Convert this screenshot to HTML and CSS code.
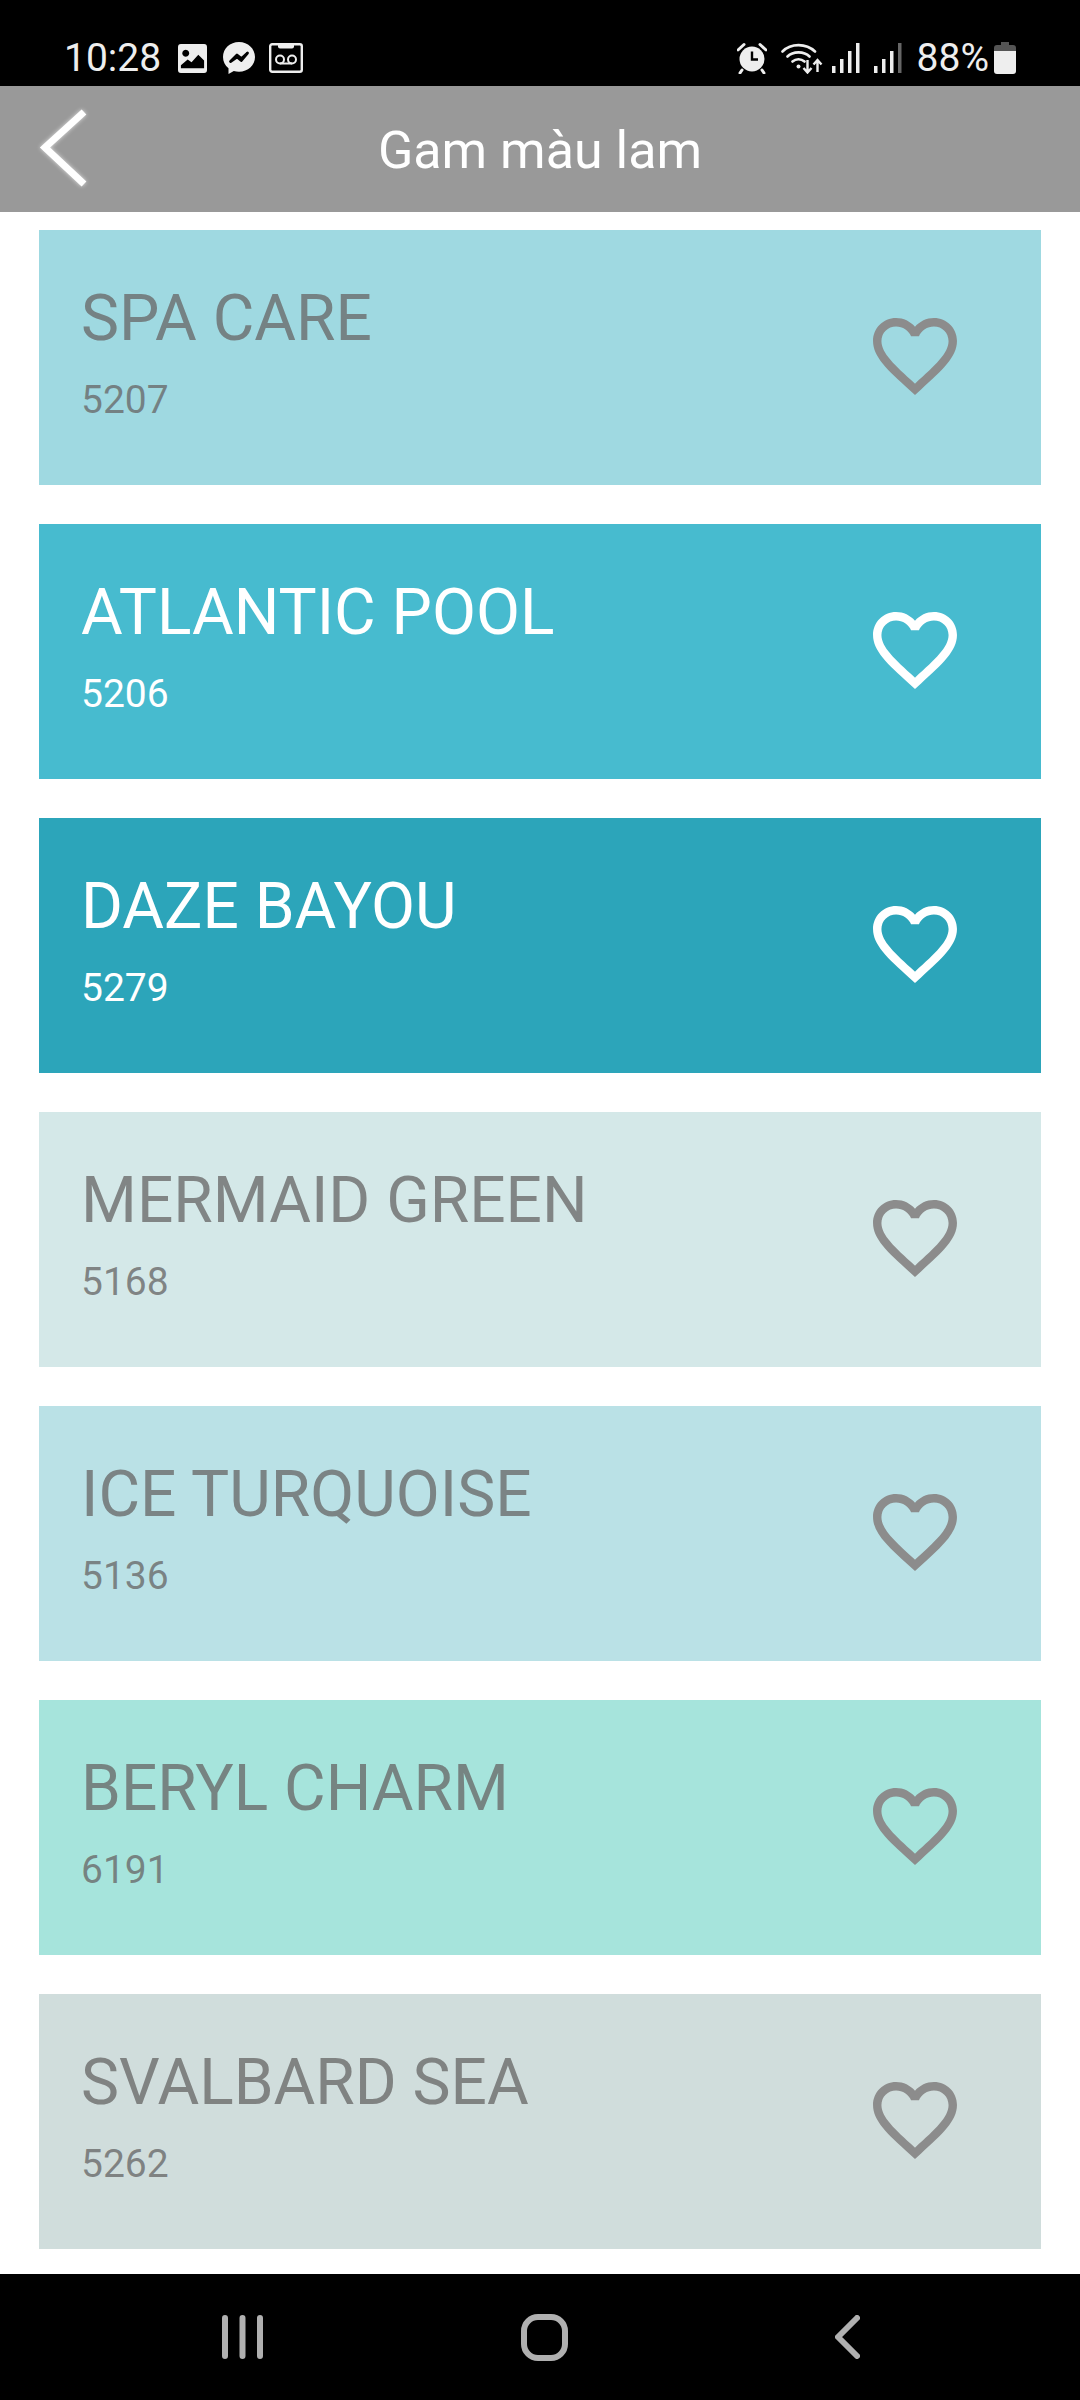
FILE: index.html
```html
<!DOCTYPE html>
<html lang="vi">
<head>
<meta charset="utf-8">
<title>Gam màu lam</title>
<link rel="stylesheet" href="styles.css">
</head>
<body>
<svg class="defs" width="0" height="0" aria-hidden="true">
  <symbol id="heart" viewBox="2 3 20 18.350">
    <path fill="currentColor" d="M16.500 3c-1.740 0-3.410.810-4.500 2.090C10.910 3.810 9.240 3 7.500 3 4.420 3 2 5.420 2 8.500c0 3.780 3.400 6.860 8.550 11.540L12 21.350l1.450-1.320C18.600 15.360 22 12.280 22 8.500 22 5.420 19.580 3 16.500 3zm-4.400 15.550l-.1.100-.1-.100C7.140 14.240 4 11.390 4 8.500 4 6.500 5.500 5 7.500 5c1.540 0 3.040.990 3.570 2.360h1.870C13.460 5.990 14.960 5 16.500 5c2 0 3.500 1.500 3.500 3.500 0 2.890-3.140 5.740-7.900 10.050z"/>
  </symbol>
</svg>
<div class="screen">
  <header class="status">
    <div class="status-left">
      <span class="time">10:28</span>
      <svg class="ic ic-pic" viewBox="0 0 30 30"><path fill="#eee" fill-rule="evenodd" d="M3 0h24a3 3 0 0 1 3 3v24a3 3 0 0 1-3 3H3a3 3 0 0 1-3-3V3a3 3 0 0 1 3-3zM8 6a3.600 3.600 0 1 0 .01 0zM3 25h24v-8l-6-6-7 8-4-3-7 6z"/></svg>
      <svg class="ic ic-msg" viewBox="0 0 32 32"><path fill="#eee" d="M16 0C7 0 0 6.600 0 15c0 4.600 2 8.500 5.500 11.200V32l5.300-3c1.600.5 3.400.7 5.200.7 9 0 16-6.400 16-14.700S25 0 16 0z"/><path fill="none" stroke="#000" stroke-width="2.800" stroke-linejoin="round" d="M7.500 19.500l6.500-6.500 4.500 3.500 6-5.500-6.300 7.500-4.200-3.500z"/></svg>
      <svg class="ic ic-vm" viewBox="0 0 34 30"><rect x="1.200" y="1.200" width="31.600" height="27.600" rx="2" fill="none" stroke="#eee" stroke-width="2.400"/><path fill="#eee" d="M9 1h16v2.500a2 2 0 0 1-2 2H11a2 2 0 0 1-2-2z"/><circle cx="11" cy="16.500" r="4" fill="none" stroke="#eee" stroke-width="2"/><circle cx="23" cy="16.500" r="4" fill="none" stroke="#eee" stroke-width="2"/><path d="M11 20.500h12" stroke="#eee" stroke-width="2"/></svg>
    </div>
    <div class="status-right">
      <svg class="ic ic-alarm" viewBox="0 0 30 32"><circle cx="15" cy="17" r="12.500" fill="#eee"/><path d="M15 9.500V17.500h6" fill="none" stroke="#000" stroke-width="2.400"/><path d="M1 8 7 2.500M29 8 23 2.500M5 28 3 31M25 28 27 31" stroke="#eee" stroke-width="3" stroke-linecap="round"/></svg>
      <svg class="ic ic-wifi" viewBox="0 0 42 32"><path d="M1.500 9.500C10 1 25 1 34 9.500M6.500 14.500C12 9 23 9 28.500 14.500M11.500 19.500C15 16.500 20 16.500 23.500 19.500" fill="none" stroke="#eee" stroke-width="2.600" stroke-linecap="round"/><circle cx="17.500" cy="24.500" r="2" fill="#eee"/><path d="M26.500 18v12M22.500 26l4 4.500 4-4.500M36.500 30V18.500M32.500 22.500l4-4.500 4 4.500" fill="none" stroke="#eee" stroke-width="2.400"/></svg>
      <svg class="ic ic-sig" viewBox="0 0 28 30"><path fill="#eee" d="M0 23h3.500v7H0zM8 16h3.500v14H8zM16 8h3.500v22H16zM24 0h3.500v30H24z"/></svg>
      <svg class="ic ic-sig ic-sig2" viewBox="0 0 28 30"><path fill="#eee" d="M0 23h3.500v7H0zM8 16h3.500v14H8zM16 8h3.500v22H16z"/><path fill="#666" d="M24 0h3.500v30H24z"/></svg>
      <span class="batt">88%</span>
      <svg class="ic ic-bat" viewBox="0 0 22 32"><path fill="#555" d="M7 0h8v3h4a3 3 0 0 1 3 3v4H0V6a3 3 0 0 1 3-3h4z"/><path fill="#eee" d="M0 9h22v20a3 3 0 0 1-3 3H3a3 3 0 0 1-3-3z"/></svg>
    </div>
  </header>
  <div class="appbar">
    <svg class="back" viewBox="0 0 50 80"><path d="M46 4 7 39.500 46 76" fill="none" stroke="#fff" stroke-width="7"/></svg>
    <h1 class="title">Gam màu lam</h1>
  </div>
  <main class="list">
    <article class="card c1"><div class="info"><div class="name">SPA CARE</div><div class="code">5207</div></div><svg class="heart"><use href="#heart"/></svg></article>
    <article class="card c2 light"><div class="info"><div class="name">ATLANTIC POOL</div><div class="code">5206</div></div><svg class="heart"><use href="#heart"/></svg></article>
    <article class="card c3 light"><div class="info"><div class="name">DAZE BAYOU</div><div class="code">5279</div></div><svg class="heart"><use href="#heart"/></svg></article>
    <article class="card c4"><div class="info"><div class="name">MERMAID GREEN</div><div class="code">5168</div></div><svg class="heart"><use href="#heart"/></svg></article>
    <article class="card c5"><div class="info"><div class="name">ICE TURQUOISE</div><div class="code">5136</div></div><svg class="heart"><use href="#heart"/></svg></article>
    <article class="card c6"><div class="info"><div class="name">BERYL CHARM</div><div class="code">6191</div></div><svg class="heart"><use href="#heart"/></svg></article>
    <article class="card c7"><div class="info"><div class="name">SVALBARD SEA</div><div class="code">5262</div></div><svg class="heart"><use href="#heart"/></svg></article>
  </main>
  <nav class="navbar">
    <svg class="nav-recent" viewBox="0 0 41 44"><path d="M3 3v38M20.500 3v38M38 3v38" stroke="#b0b0b0" stroke-width="6" stroke-linecap="round"/></svg>
    <svg class="nav-home" viewBox="0 0 47 47"><rect x="3" y="3" width="41" height="41" rx="14" fill="none" stroke="#b0b0b0" stroke-width="6"/></svg>
    <svg class="nav-back" viewBox="0 0 25 44"><path d="M22 3 3 22l19 19" fill="none" stroke="#b0b0b0" stroke-width="6" stroke-linecap="round" stroke-linejoin="round"/></svg>
  </nav>
</div>
</body>
</html>
```
FILE: styles.css
```css
* { box-sizing: border-box; margin: 0; padding: 0; }
html, body { width: 1080px; height: 2400px; overflow: hidden; background: #fff; }
body { font-family: Roboto, "Noto Sans", sans-serif; }
.defs { position: absolute; }
.screen { width: 1080px; height: 2400px; display: flex; flex-direction: column; }

.status { height: 86px; background: #000; color: #eee; display: flex; justify-content: space-between; align-items: flex-start; padding: 41px 64px 0 64px; flex: none; }
.status-left, .status-right { display: flex; align-items: center; height: 34px; }
.time { font-size: 39px; line-height: 34px; width: 97px; }
.ic { display: block; flex: none; }
.ic-pic { width: 29px; height: 29px; margin-left: 17px; }
.ic-msg { width: 32px; height: 32px; margin-left: 16px; }
.ic-vm { width: 34px; height: 30px; margin-left: 14px; }
.ic-alarm { width: 30px; height: 32px; }
.ic-wifi { width: 42px; height: 32px; margin-left: 14px; }
.ic-sig { width: 28px; height: 30px; margin-left: 9px; }
.ic-sig2 { margin-left: 14px; }
.batt { font-size: 39px; line-height: 34px; margin-left: 15px; }
.ic-bat { width: 22px; height: 32px; margin-left: 5px; }

.appbar { height: 126px; flex: none; background: #999; display: flex; align-items: center; justify-content: center; position: relative; }
.back { position: absolute; left: 38px; top: 22px; width: 50px; height: 80px; filter: drop-shadow(0 0 2px rgba(255,255,255,.7)); }
.title { font-size: 52px; font-weight: 400; color: #fff; margin-top: 2px; }

.list { flex: 1; display: flex; flex-direction: column; gap: 39px; padding: 18px 39px 0; }
.card { height: 255px; flex: none; display: flex; justify-content: space-between; align-items: center; padding: 0 84px 0 42px; color: rgba(105, 105, 105, .78); }
.info { display: flex; flex-direction: column; height: 255px; padding-top: 52px; }
.name { font-size: 64px; line-height: 74px; }
.code { font-size: 39px; line-height: 46px; margin-top: 21px; }
.heart { width: 84px; height: 77px; margin-top: -2px; color: #8c8c8c; }
.light { color: #fff; }
.light .heart { color: #fff; }
.c1 { background: #9fd9e1; }
.c2 { background: #47bbcf; }
.c3 { background: #2ca5ba; }
.c4 { background: #d4e8e8; }
.c5 { background: #bae1e6; }
.c6 { background: #a6e4dc; }
.c7 { background: #d0dddc; }

.navbar { height: 126px; flex: none; background: #000; display: flex; align-items: flex-start; justify-content: space-between; padding: 41px 220px 0 222px; }
.nav-recent { width: 41px; height: 44px; }
.nav-home { width: 47px; height: 47px; margin-top: -1px; margin-right: 9px; }
.nav-back { width: 25px; height: 44px; }
```
